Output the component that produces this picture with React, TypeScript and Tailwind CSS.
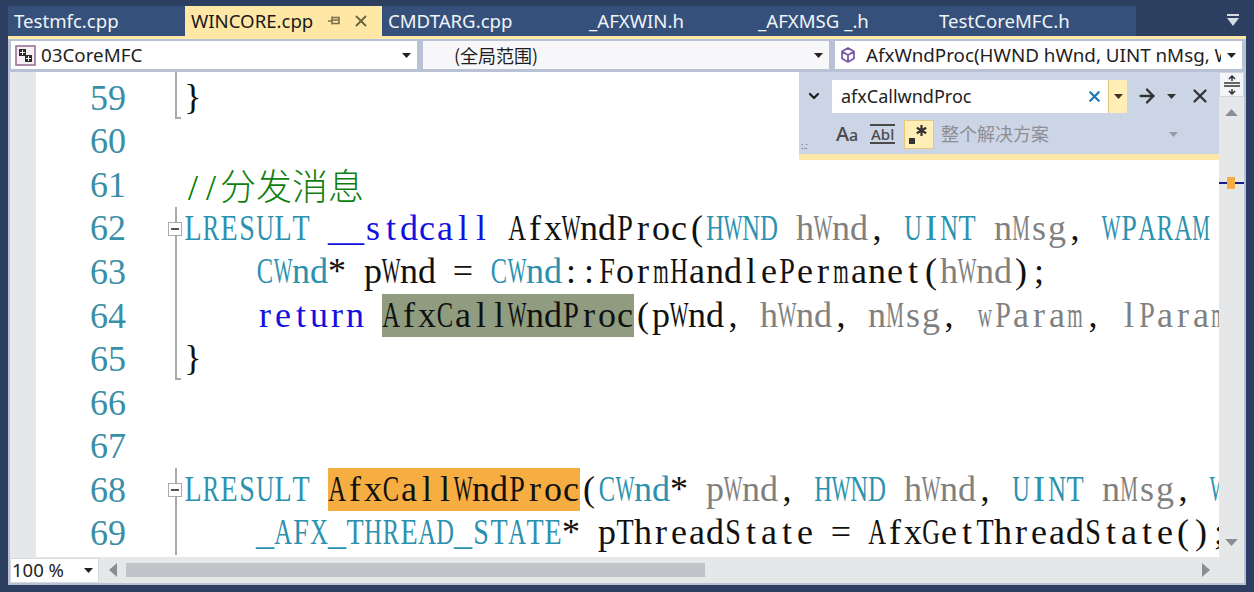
import { ChevronDown, ArrowRight, X } from 'lucide-react'

type Seg = [string, string?]
type Line = { n: number; fold?: 'open' | 'mid' | 'end'; segs: Seg[] }

const TYPE = 'text-[#2b91af]'
const KEY = 'text-[#1212e0]'
const PARAM = 'text-[#808080]'
const HL_GREY = 'bg-[#8f9c7f]'
const HL_ORANGE = 'bg-[#f6ae42]'

const LINES: Line[] = [
  { n: 59, fold: 'end', segs: [['}']] },
  { n: 60, segs: [] },
  { n: 61, segs: [['//', 'text-[#008000]'], ['分发消息', 'cjk']] },
  {
    n: 62,
    fold: 'open',
    segs: [
      ['LRESULT', TYPE], [' '], ['__stdcall', KEY], [' AfxWndProc('], ['HWND', TYPE], [' '], ['hWnd', PARAM], [', '],
      ['UINT', TYPE], [' '], ['nMsg', PARAM], [', '], ['WPARAM', TYPE],
    ],
  },
  {
    n: 63,
    fold: 'mid',
    segs: [['    '], ['CWnd', TYPE], ['* pWnd = '], ['CWnd', TYPE], ['::FormHandlePermanet('], ['hWnd', PARAM], [');']],
  },
  {
    n: 64,
    fold: 'mid',
    segs: [
      ['    '], ['return', KEY], [' '], ['AfxCallWndProc', HL_GREY], ['(pWnd, '], ['hWnd', PARAM], [', '], ['nMsg', PARAM],
      [', '], ['wParam', PARAM], [', '], ['lParam', PARAM],
    ],
  },
  { n: 65, fold: 'end', segs: [['}']] },
  { n: 66, segs: [] },
  { n: 67, segs: [] },
  {
    n: 68,
    fold: 'open',
    segs: [
      ['LRESULT', TYPE], [' '], ['AfxCallWndProc', HL_ORANGE], ['('], ['CWnd', TYPE], ['* '], ['pWnd', PARAM], [', '],
      ['HWND', TYPE], [' '], ['hWnd', PARAM], [', '], ['UINT', TYPE], [' '], ['nMsg', PARAM], [', '], ['WPARAM', TYPE],
    ],
  },
  {
    n: 69,
    fold: 'mid',
    segs: [['    '], ['_AFX_THREAD_STATE', TYPE], ['* pThreadState = AfxGetThreadState();']],
  },
]

const TABS = [
  { label: 'Testmfc.cpp', w: 'w-[177px] pl-[6px]' },
  { label: 'CMDTARG.cpp', w: 'w-[207px] pl-[6px]' },
  { label: '_AFXWIN.h', w: 'w-[169px] pl-0' },
  { label: '_AFXMSG _.h', w: 'w-[181px] pl-0' },
  { label: 'TestCoreMFC.h', w: 'w-[197px] pl-0' },
]

// the editor font is a narrow monospaced serif, so every char gets an 18px cell
function cellClass(c: string) {
  if ('MWmw'.includes(c)) return 'scale-x-[0.55]'
  if ('ACDGHKNOQRUVXY'.includes(c)) return 'scale-x-[0.68]'
  if ('BEFLPSTZ'.includes(c)) return 'scale-x-[0.78]'
  return ''
}

function Mono({ text }: { text: string }) {
  return (
    <>
      {text.split('').map((c, i) => (
        <span key={i} className={`inline-flex w-[18px] justify-center ${cellClass(c)}`}>
          {c}
        </span>
      ))}
    </>
  )
}

function Caret({ className = '' }: { className?: string }) {
  return (
    <svg width="9" height="5" viewBox="0 0 9 5" className={className}>
      <path d="M0 0h9L4.5 5z" fill="currentColor" />
    </svg>
  )
}

function Fold({ kind }: { kind?: Line['fold'] }) {
  if (!kind) return <div className="w-[9px] shrink-0" />
  return (
    <div className="relative h-full w-[9px] shrink-0">
      {kind === 'end' ? (
        <div className="absolute left-0 top-[-4px] h-[calc(100%+3px)] w-[6px] border-b-2 border-l-2 border-[#a9a9a9]" />
      ) : (
        <div className="absolute inset-y-0 left-0 w-[2px] bg-[#a9a9a9]" />
      )}
      {kind === 'open' && (
        <div className="absolute left-[-7px] top-[15px] flex h-[14px] w-[14px] items-center justify-center border border-[#a9a9a9] bg-white">
          <div className="h-[2px] w-[8px] bg-[#555]" />
        </div>
      )}
    </div>
  )
}

function CodeLine({ line }: { line: Line }) {
  return (
    <div className="flex h-[43.55px] shrink-0 items-stretch">
      <div className="flex w-[90px] shrink-0 items-center justify-end text-[#3a8fa8]">{line.n}</div>
      <div className="w-[49px] shrink-0" />
      <Fold kind={line.fold} />
      <div className="whitespace-pre leading-[43.55px] text-[#111]">
        {line.segs.map(([text, cls], i) =>
          cls === 'cjk' ? (
            <span key={i} className="font-['Noto_Sans_CJK_SC',sans-serif] font-light text-[#0f7f0f]">
              {text}
            </span>
          ) : (
            <span key={i} className={`inline-block h-[43.55px] ${cls ?? ''}`}>
              <Mono text={text} />
            </span>
          ),
        )}
      </div>
    </div>
  )
}

function FindPanel() {
  return (
    <div className="absolute right-0 top-0 z-10 flex h-[88px] w-[420px] flex-col border-b-[6px] border-[#ffe8a6] bg-[#ccd5e5] font-['Noto_Sans','Noto_Sans_CJK_SC',sans-serif]">
      <div className="flex h-[44px] shrink-0 items-center pt-[4px]">
        <ChevronDown className="ml-[7px] h-[16px] w-[16px] text-[#222]" strokeWidth={3.5} />
        <div className="ml-[10px] flex h-[33px] w-[276px] items-center justify-between bg-white pl-[9px] pr-[5px] text-[18px] text-[#222]">
          <span>afxCallwndProc</span>
          <X className="h-[17px] w-[17px] text-[#1a76b8]" strokeWidth={3} />
        </div>
        <div className="flex h-[33px] w-[19px] items-center justify-center border-l border-[#d8c27a] bg-[#ffeeb5] text-[#3a3320]">
          <Caret />
        </div>
        <ArrowRight className="ml-[9px] h-[22px] w-[22px] text-[#333]" strokeWidth={2.5} />
        <Caret className="ml-[9px] text-[#333]" />
        <X className="ml-[13px] h-[22px] w-[22px] text-[#333]" strokeWidth={2.5} />
      </div>
      <div className="relative flex h-[36px] items-center pl-[37px] text-[#4a4a4a]">
        <span className="w-[34px] text-[20px] font-medium leading-none">
          A<span className="text-[16px]">a</span>
        </span>
        <span className="w-[34px] border-y-2 border-transparent text-[15px] font-medium leading-none">
          <span className="inline-block border-y-2 border-[#4a4a4a] px-px leading-[16px]">Abl</span>
        </span>
        <div className="flex h-[29px] w-[30px] items-center justify-center border border-[#e5c77f] bg-[#ffeeb5]">
          <svg width="22" height="22" viewBox="0 0 22 22" className="text-[#333]">
            <rect x="1" y="15" width="6" height="6" fill="currentColor" />
            <path d="M13.5 2v11M8.8 4.7l9.4 5.6M18.2 4.7l-9.4 5.6" stroke="currentColor" strokeWidth="2.2" />
          </svg>
        </div>
        <span className="ml-[7px] text-[18px] text-[#8e8e94]">整个解决方案</span>
        <Caret className="ml-[120px] text-[#9a9aa2]" />
        <div className="absolute bottom-[2px] left-[2px] text-[9px] leading-none tracking-tight text-[#667]">:.:</div>
      </div>
    </div>
  )
}

function VScroll() {
  return (
    <div className="relative flex w-[25px] shrink-0 flex-col items-center bg-[#e6e7e9]">
      <div className="flex h-[25px] w-full items-center justify-center border border-[#d0d6e2] bg-[#f4f5f8]">
        <svg width="18" height="20" viewBox="0 0 18 20" fill="none" stroke="#333" strokeWidth="1.5">
          <path d="M1 8h16M1 11h16M9 1v5M9 14v5M6 4l3-3 3 3M6 16l3 3 3-3" />
        </svg>
      </div>
      <Caret className="mt-[12px] h-[7px] w-[13px] rotate-180 text-[#8b8d95]" />
      <div className="absolute left-0 right-0 top-[110px] h-[2px] bg-[#1a1a8c]" />
      <div className="absolute left-[8px] top-[105px] h-[12px] w-[8px] bg-[#f6ae42]" />
      <Caret className="absolute bottom-[11px] h-[7px] w-[13px] text-[#8b8d95]" />
    </div>
  )
}

export default function App() {
  return (
    <div className="flex h-[592px] w-[1254px] flex-col overflow-hidden bg-[#2c3f60] pb-[7px] pl-[8px] pr-[8px] pt-[6px] font-['Noto_Sans',sans-serif]">
      {/* tab strip */}
      <div className="relative flex h-[30px] shrink-0 text-[18.6px] leading-[30px] text-[#f1f4f9]">
        <div className={`bg-[#35517b] ${TABS[0].w}`}>{TABS[0].label}</div>
        <div className="flex w-[197px] items-center bg-[#ffe8a6] pl-[6px] text-[#1a1a1a]">
          <span>WINCORE.cpp</span>
          <svg width="14" height="14" viewBox="0 0 14 14" className="ml-[14px] text-[#7b6f45]" fill="none" stroke="currentColor" strokeWidth="1.6">
            <path d="M1 7h4M5 3.5h7v6H5zM5 2.5v8M5 6h7" />
          </svg>
          <X className="ml-[11px] h-[18px] w-[18px] text-[#6e6540]" strokeWidth={2.5} />
        </div>
        {TABS.slice(1).map((t) => (
          <div key={t.label} className={`bg-[#35517b] ${t.w}`}>
            {t.label}
          </div>
        ))}
        <svg width="14" height="14" viewBox="0 0 14 14" className="absolute right-[6px] top-[8px] text-[#d6dbe6]">
          <path d="M1 0h12v2H1zM1 4h12L7 12z" fill="currentColor" />
        </svg>
      </div>
      <div className="h-[3px] shrink-0 bg-[#ffe8a6]" />

      <div className="flex min-h-0 flex-1 flex-col border-x-2 border-b-2 border-[#b8c2d4] bg-[#b8c2d4]">
        {/* nav bar */}
        <div className="flex h-[33px] shrink-0 gap-[6px] pb-[3px] pl-px pt-[2px] text-[18.8px] leading-[28px] text-[#1e1e1e]">
          <div className="flex w-[406px] items-center bg-white pl-[4px] pr-[6px]">
            <svg width="21" height="21" viewBox="0 0 21 21" className="mr-[5px]">
              <rect x="1" y="1" width="19" height="19" fill="#f6f0f6" stroke="#93698f" strokeWidth="1.5" />
              <path d="M4 4h7v7H4zM10 10h7v7h-7z" fill="#2b2b2b" />
              <path d="M7.5 5v5M5 7.5h5M13.5 11v5M11 13.5h5" stroke="#eee" strokeWidth="1" />
            </svg>
            <span className="flex-1">03CoreMFC</span>
            <Caret className="text-[#222]" />
          </div>
          <div className="flex w-[406px] items-center bg-[#f7f7f9] pl-[31px] pr-[6px]">
            <span className="flex-1 font-['Noto_Sans_CJK_SC',sans-serif] text-[18px]">(全局范围)</span>
            <Caret className="text-[#222]" />
          </div>
          <div className="flex w-[407px] items-center bg-white pl-[4px] pr-[6px]">
            <svg width="18" height="18" viewBox="0 0 18 18" className="mr-[9px] shrink-0" fill="none" stroke="#7a5aa8" strokeWidth="1.8">
              <path d="M9 2l6 3.5v7L9 16l-6-3.5v-7zM3 5.5L9 9l6-3.5M9 9v7" />
            </svg>
            <span className="w-[355px] shrink-0 overflow-hidden whitespace-nowrap">AfxWndProc(HWND hWnd, UINT nMsg, WPARAM</span>
            <Caret className="ml-auto shrink-0 text-[#222]" />
          </div>
        </div>

        {/* editor */}
        <div className="flex min-h-0 flex-1">
          <div className="w-[26px] shrink-0 bg-[#e6e7e9]" />
          <div className="relative min-w-0 flex-1 overflow-hidden bg-white">
            <div className="flex flex-col pt-[4px] font-['Liberation_Serif',serif] text-[36px]">
              {LINES.map((l) => (
                <CodeLine key={l.n} line={l} />
              ))}
            </div>
            <FindPanel />
          </div>
          <VScroll />
        </div>

        {/* bottom bar */}
        <div className="flex h-[26px] shrink-0 items-center bg-[#e6e7e9] text-[18.5px] text-[#222]">
          <div className="flex h-[25px] w-[89px] items-center border border-[#d6d9e0] bg-white pl-px pr-[5px] leading-none">
            <span className="flex-1">100 %</span>
            <Caret className="text-[#222]" />
          </div>
          <svg width="8" height="14" viewBox="0 0 8 14" className="ml-[10px] text-[#8b8d95]">
            <path d="M8 0v14L0 7z" fill="currentColor" />
          </svg>
          <div className="ml-[9px] h-[14px] w-[579px] bg-[#c2c3c9]" />
          <svg width="8" height="14" viewBox="0 0 8 14" className="ml-[497px] text-[#8b8d95]">
            <path d="M0 0v14l8-7z" fill="currentColor" />
          </svg>
        </div>
      </div>
    </div>
  )
}
